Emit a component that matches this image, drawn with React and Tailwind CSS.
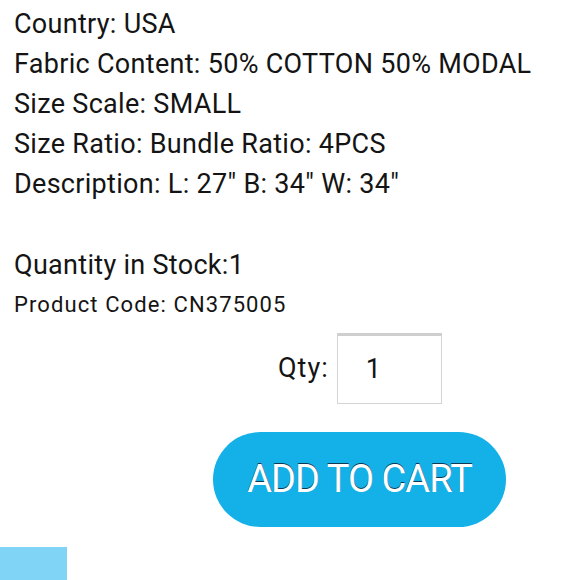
import React from "react";

const specs = [
    "Country: USA",
    "Fabric Content: 50% COTTON 50% MODAL",
    "Size Scale: SMALL",
    "Size Ratio: Bundle Ratio: 4PCS",
    "Description: L: 27\" B: 34\" W: 34\"",
];

function App() {
    return (
        <div className="w-[580px] h-[580px] overflow-hidden bg-white text-[#141414] font-['Roboto',sans-serif]">
            <div className="pl-[14px] pt-[4px]">
                {specs.map((line) => (
                    <p key={line} className="text-[27px] tracking-[0.3px] leading-[40px]">
                        {line}
                    </p>
                ))}
                <p className="text-[27px] tracking-[0.3px] leading-[40px] mt-[41px]">Quantity in Stock:1</p>
                <p className="text-[22px] tracking-[1.1px] leading-[40px]">Product Code: CN375005</p>
            </div>

            {/* quantity + cart */}
            <div className="flex items-center pl-[278px] mt-[8px]">
                <span className="text-[27px] tracking-[1px]">Qty:</span>
                <div className="ml-[8px] w-[105px] h-[71px] border border-[#d4d4d4] border-t-[3px] border-t-[#cfcfcf] flex items-center pl-[28px] text-[27px]">
                    1
                </div>
            </div>
            <div className="pl-[213px] mt-[28px]">
                <button className="w-[293px] h-[95px] rounded-full bg-[#14b0e8] text-white text-[38px] tracking-tight [text-shadow:0_-1px_0_#0b3a52]">
                    ADD TO CART
                </button>
            </div>
            <div className="mt-[20px] w-[67px] h-[40px] bg-[#80d4f6]"></div>
        </div>
    );
}

export default App;
